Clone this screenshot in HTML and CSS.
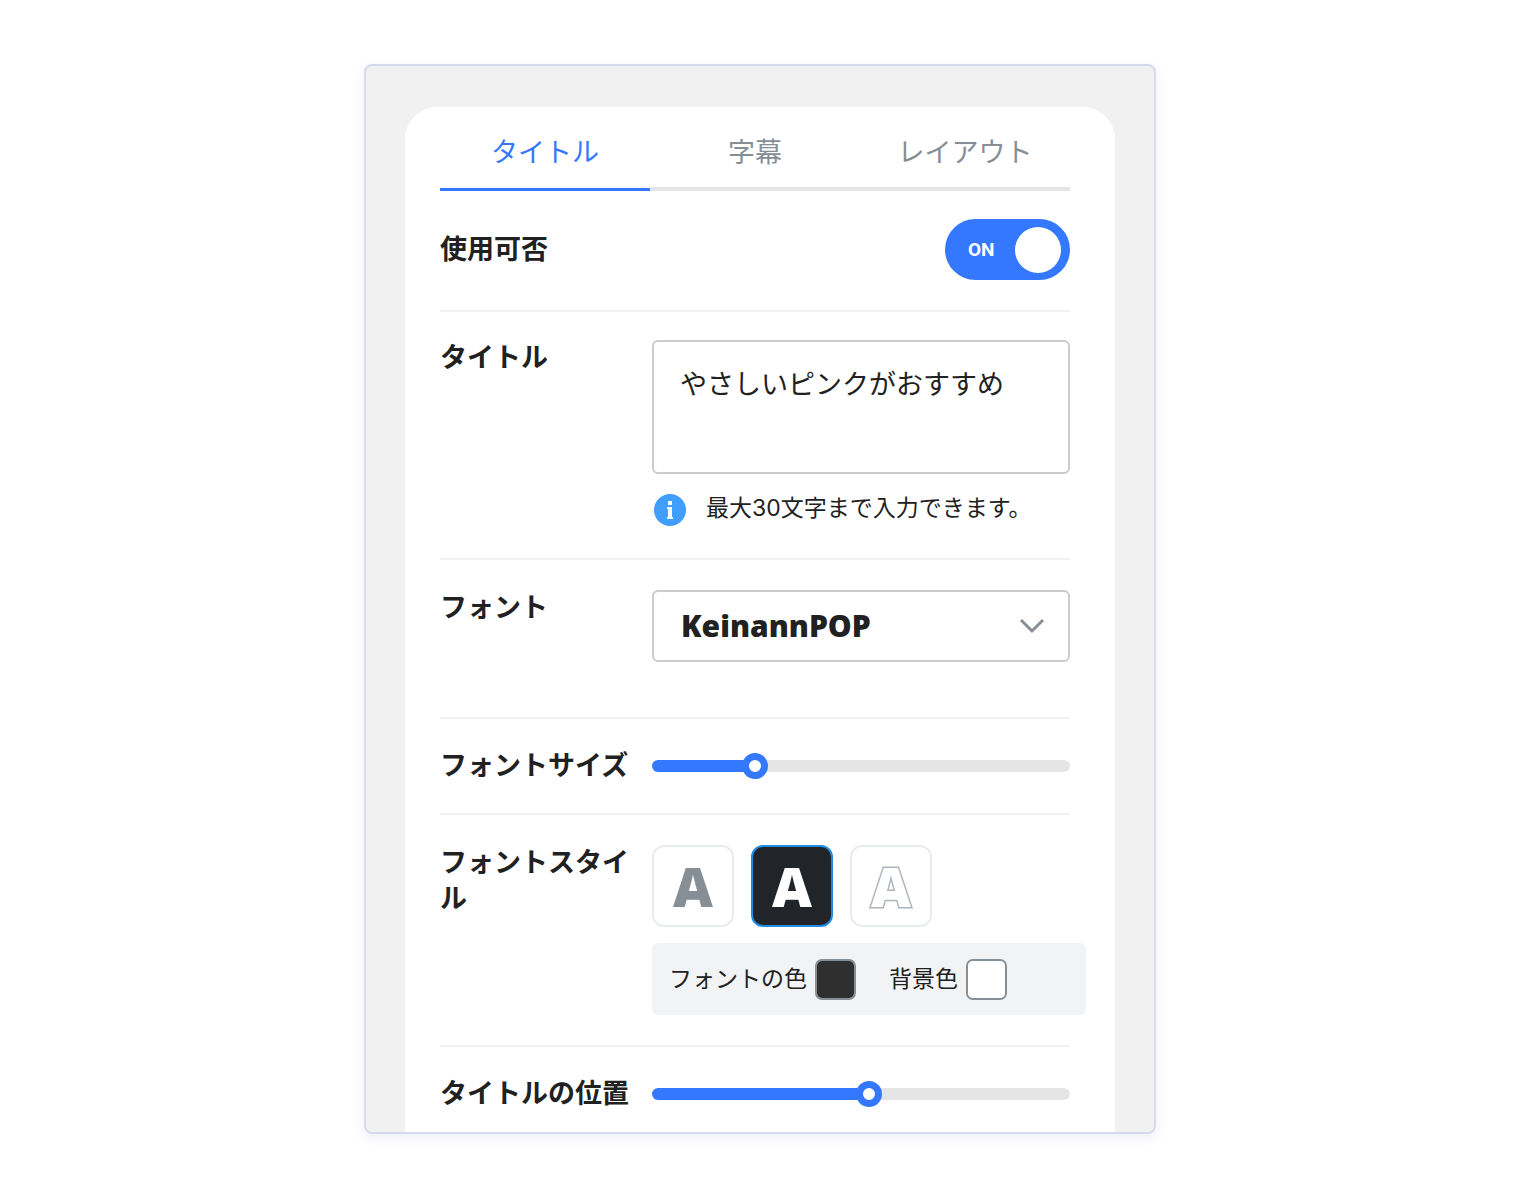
FILE: index.html
```html
<!DOCTYPE html>
<html lang="ja">
<head>
    <meta charset="UTF-8">
    <meta name="viewport" content="width=device-width, initial-scale=1.0">
    <title>タイトル</title>
    <link rel="stylesheet" href="styles.css">
</head>
<body>

    <main class="panel">
        <form class="card">
            <nav class="tabs">
                <a class="tab active" href="#title">タイトル</a>
                <a class="tab" href="#subtitle">字幕</a>
                <a class="tab" href="#layout">レイアウト</a>
            </nav>

            <div class="row row-use">
                <label class="name" for="use">使用可否</label>
                <label class="toggle">
                    <input type="checkbox" id="use" checked>
                    <span class="toggle-text">ON</span>
                    <span class="knob"></span>
                </label>
            </div>

            <div class="row row-title">
                <label class="name" for="title">タイトル</label>
                <div class="field">
                    <textarea id="title" maxlength="30">やさしいピンクがおすすめ</textarea>
                    <p class="hint">
                        <svg width="32" height="32" viewBox="0 0 32 32" aria-hidden="true">
                            <circle cx="16" cy="16" r="16" fill="#409eff"/>
                            <path d="M14 7h4v4h-4zM13 13h5v10h1v2h-6v-2h1v-8h-1z" fill="#fff"/>
                        </svg>
                        最大30文字まで入力できます。
                    </p>
                </div>
            </div>

            <div class="row row-font">
                <label class="name" for="font">フォント</label>
                <div class="select">
                    <select id="font">
                        <option>KeinannPOP</option>
                    </select>
                    <svg width="26" height="16" viewBox="0 0 26 16" aria-hidden="true">
                        <path d="M2 2l11 11L24 2" fill="none" stroke="#868e96" stroke-width="3"/>
                    </svg>
                </div>
            </div>

            <div class="row row-slider">
                <label class="name" for="size">フォントサイズ</label>
                <input type="range" id="size" min="0" max="100" value="23" style="--fill: 23%">
            </div>

            <div class="row row-style">
                <span class="name">フォントスタイル</span>
                <div class="field">
                    <div class="styles">
                        <button type="button" class="style-btn">A</button>
                        <button type="button" class="style-btn selected">A</button>
                        <button type="button" class="style-btn outline">A</button>
                    </div>
                    <div class="colors">
                        <label for="color">フォントの色</label>
                        <input type="color" id="color" value="#2f2f2f">
                        <label for="bg">背景色</label>
                        <input type="color" id="bg" value="#ffffff">
                    </div>
                </div>
            </div>

            <div class="row row-slider">
                <label class="name" for="position">タイトルの位置</label>
                <input type="range" id="position" min="0" max="100" value="52" style="--fill: 52%">
            </div>
        </form>
    </main>

    <script>
        document.querySelectorAll('input[type="range"]').forEach(range => {
            range.addEventListener('input', () => {
                range.style.setProperty('--fill', range.value + '%');
            });
        });
    </script>

</body>
</html>
```
FILE: styles.css
```css
* {
    box-sizing: border-box;
}

body {
    margin: 0;
    padding: 64px 24px;
    background-color: #fff;
    color: #212121;
    font-family: "Noto Sans CJK JP", sans-serif;
    font-size: 27px;
    line-height: 36px;
}

.panel {
    max-width: 792px;
    margin: 0 auto;
    padding: 41px 39px 0;
    background-color: #f1f1f1;
    border: 2px solid #d9d9ec;
    border-radius: 8px;
    box-shadow: 0 4px 12px rgba(100, 90, 200, 0.1);
}

.card {
    padding: 0 45px 0 35px;
    background-color: #fff;
    border-radius: 32px 32px 0 0;
}

.tabs {
    display: grid;
    grid-template-columns: repeat(3, 1fr);
}

.tab {
    padding: 26px 0 18px;
    border-bottom: 4px solid #e5e5e5;
    color: #868e96;
    text-align: center;
    text-decoration: none;
}

.tab.active {
    border-bottom: 3px solid #3478ff;
    padding-bottom: 19px;
    color: #3478ff;
}

.row {
    display: grid;
    grid-template-columns: 212px minmax(0, 1fr);
    align-items: start;
    padding: 28px 0;
    border-bottom: 2px solid #f2f2f2;
}

.row-use {
    align-items: center;
    padding-bottom: 30px;
}

.row-font {
    padding: 30px 0 55px;
}

.row-slider {
    align-items: center;
    padding: 29px 0;
}

.row-style {
    padding: 30px 0;
}

.row:last-child {
    padding-bottom: 20px;
    border-bottom: 0;
}

.name {
    margin: -2px 0 2px;
    font-weight: 700;
}

.field {
    min-width: 0;
}

/* on/off switch */
.toggle {
    display: flex;
    align-items: center;
    justify-content: space-between;
    justify-self: end;
    width: 125px;
    height: 61px;
    padding: 0 9px 0 23px;
    background-color: #3478ff;
    border-radius: 31px;
    cursor: pointer;
}

.toggle input {
    position: absolute;
    opacity: 0;
}

.toggle-text {
    color: #fff;
    font-family: Roboto, sans-serif;
    font-size: 19px;
    font-weight: 700;
}

.knob {
    width: 46px;
    height: 46px;
    background-color: #fff;
    border-radius: 50%;
}

textarea,
select {
    display: block;
    width: 100%;
    background-color: #fff;
    border: 2px solid #ccc;
    border-radius: 6px;
    color: inherit;
    font: inherit;
}

textarea {
    height: 134px;
    padding: 23px 26px;
    resize: none;
}

.hint {
    display: flex;
    align-items: flex-start;
    gap: 20px;
    margin: 20px 0 4px;
    padding-left: 2px;
    font-family: Inter, "Noto Sans CJK JP", sans-serif;
    font-size: 23px;
    line-height: 28px;
}

.select {
    position: relative;
}

select {
    height: 72px;
    padding: 0 60px 0 27px;
    appearance: none;
    font-family: "Open Sans", sans-serif;
    font-size: 30px;
    font-weight: 800;
}

.select svg {
    position: absolute;
    top: 28px;
    right: 25px;
    pointer-events: none;
}

input[type="range"] {
    width: 100%;
    height: 26px;
    margin: 0;
    appearance: none;
    background: none;
}

input[type="range"]::-webkit-slider-runnable-track {
    height: 12px;
    border-radius: 6px;
    background: linear-gradient(to right, #3478ff var(--fill), #e5e5e5 var(--fill));
}

input[type="range"]::-webkit-slider-thumb {
    width: 26px;
    height: 26px;
    margin-top: -7px;
    appearance: none;
    background-color: #fff;
    border: 7px solid #3478ff;
    border-radius: 50%;
}

.styles {
    display: flex;
    gap: 17px;
}

.style-btn {
    width: 82px;
    height: 82px;
    padding: 0;
    background-color: #fff;
    border: 2px solid #e9ecef;
    border-radius: 12px;
    color: #868e96;
    font-family: "Open Sans", sans-serif;
    font-size: 55px;
    font-weight: 800;
    line-height: 76px;
}

.style-btn.selected {
    background-color: #212529;
    border-color: #228be6;
    color: #fff;
}

.style-btn.outline {
    color: #fff;
    -webkit-text-stroke: 3px #adb5bd;
    paint-order: stroke fill;
}

.colors {
    display: flex;
    align-items: center;
    width: 434px;
    height: 72px;
    margin-top: 16px;
    padding: 0 17px;
    background-color: #f1f3f5;
    border-radius: 6px;
    font-size: 23px;
}

.colors label {
    padding-bottom: 4px;
}

.colors input {
    width: 41px;
    height: 41px;
    margin: 0 33px 0 8px;
    padding: 0;
    appearance: none;
    border: 2px solid #868e96;
    border-radius: 7px;
    overflow: hidden;
}

.colors input::-webkit-color-swatch-wrapper {
    padding: 0;
}

.colors input::-webkit-color-swatch {
    border: 0;
}
```
